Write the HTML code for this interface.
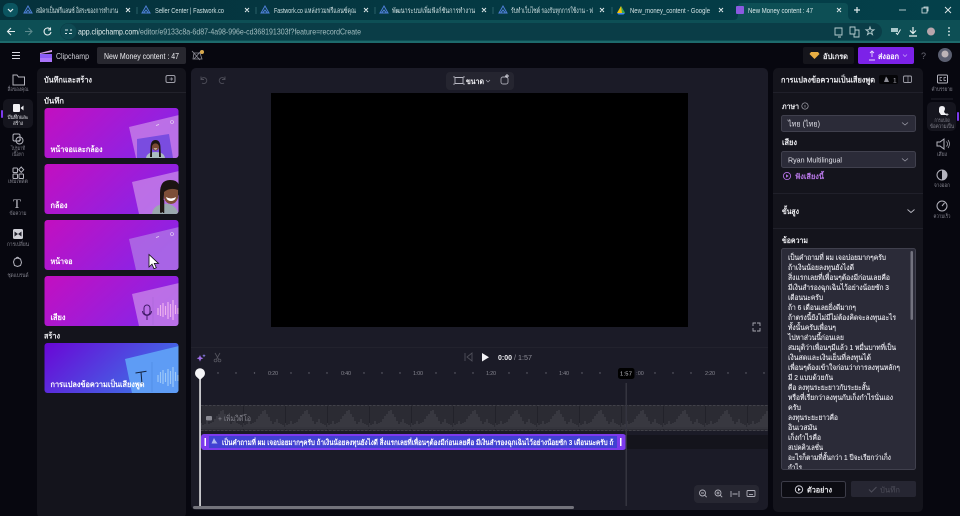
<!DOCTYPE html>
<html><head><meta charset="utf-8"><style>
html,body{margin:0;padding:0;background:#07070f;overflow:hidden}
svg{display:block;font-family:"Liberation Sans","Noto Sans CJK JP",sans-serif;filter:blur(.3px)}
.t{fill:#eeeef2}
.b{font-weight:700}
</style></head><body>
<svg width="960" height="516" viewBox="0 0 960 516" xmlns="http://www.w3.org/2000/svg">
<defs>
<linearGradient id="g1" x1="0" y1="0" x2="1" y2="0.4"><stop offset="0" stop-color="#c30fc0"/><stop offset="1" stop-color="#8a24e6"/></linearGradient>
<linearGradient id="g2" x1="0" y1="0" x2="1" y2="0.4"><stop offset="0" stop-color="#6a06d6"/><stop offset="1" stop-color="#3f6fe6"/></linearGradient>
<linearGradient id="tb" x1="0" y1="0" x2="1" y2="0"><stop offset="0" stop-color="#05323c"/><stop offset="1" stop-color="#04404a"/></linearGradient>
<pattern id="wave" x="201" y="405" width="42" height="26" patternUnits="userSpaceOnUse">
<rect width="42" height="26" fill="#2b2b33"/><rect x="0" width="1" height="26" fill="#22222a"/>
<path d="M0 22V18M2 22V20M4 22V19M6 22V16M8 22V19M10 22V18M12 22V17M14 22V14M16 22V11M18 22V9M20 22V6M22 22V5M24 22V9M26 22V12M28 22V16M30 22V19M32 22V17M34 22V14M36 22V18M38 22V19M40 22V20" stroke="#3f3f47" stroke-width="1.300"/>
<rect y="22" width="42" height="2" fill="#35353d"/>
</pattern>
<clipPath id="ta"><rect x="782" y="249" width="128" height="220"/></clipPath>
<clipPath id="c1"><rect x="44.5" y="108" width="134" height="50" rx="3"/></clipPath>
<clipPath id="c2"><rect x="44.5" y="164" width="134" height="50" rx="3"/></clipPath>
<clipPath id="c3"><rect x="44.5" y="220" width="134" height="50" rx="3"/></clipPath>
<clipPath id="c4"><rect x="44.5" y="276" width="134" height="50" rx="3"/></clipPath>
<clipPath id="c5"><rect x="44.5" y="343" width="134" height="50" rx="3"/></clipPath>
<clipPath id="clipT"><rect x="215" y="435" width="399" height="14"/></clipPath>
</defs>

<rect width="960" height="516" fill="#07070f"/>
<!-- Tab strip -->
<rect width="960" height="20" fill="url(#tb)"/>
<rect x="3" y="3" width="15" height="14" rx="6" fill="#0b5560"/>
<path d="M8 9l2.5 2.5L13 9" fill="none" stroke="#e5eeee" stroke-width="1.2"/>
<g fill="none" stroke="#4d7fd6" stroke-width="1">
<path d="M28 6l4 7h-8zM25.5 13l2.5-3 2.5 3"/>
<path d="M146 6l4 7h-8zM143.500 13l2.500-3 2.500 3"/>
<path d="M265 6l4 7h-8zM262.500 13l2.500-3 2.500 3"/>
<path d="M384 6l4 7h-8zM381.500 13l2.500-3 2.500 3"/>
<path d="M503 6l4 7h-8zM500.500 13l2.500-3 2.500 3"/>
</g>
<g font-size="7.500" fill="#cfe0e2">
<text x="36" y="13" textLength="82" lengthAdjust="spacingAndGlyphs">สมัครเป็นฟรีแลนซ์ อิสระของการทำงาน</text>
<text x="155" y="13" textLength="69" lengthAdjust="spacingAndGlyphs">Seller Center | Fastwork.co</text>
<text x="274" y="13" textLength="82" lengthAdjust="spacingAndGlyphs">Fastwork.co แหล่งรวมฟรีแลนซ์คุณ</text>
<text x="392" y="13" textLength="83" lengthAdjust="spacingAndGlyphs">พัฒนาระบบ/เพิ่มฟังก์ชันการทำงาน</text>
<text x="511" y="13" textLength="82" lengthAdjust="spacingAndGlyphs">รับทำเว็บไซต์ รองรับทุกการใช้งาน - ฟ</text>
<text x="630" y="13" textLength="80" lengthAdjust="spacingAndGlyphs">New_money_content - Google</text>
</g>
<path d="M621 6l-4 7h8z" fill="#f4c20d"/><path d="M621 6l4 7h-3z" fill="#34a853"/><path d="M617 13h8l-1.500 1.500h-5z" fill="#4285f4"/>
<path d="M733 20q5 0 5-5V7q0-4 4-4h102q4 0 4 4v8q0 5 5 5z" fill="#0d4f55"/>
<rect x="736" y="6" width="8" height="8" rx="1" fill="#8a5ae0"/>
<text x="748" y="13" font-size="7.500" fill="#d8e8ea" textLength="65" lengthAdjust="spacingAndGlyphs">New Money content : 47</text>
<g stroke="#dfe9ea" stroke-width="1" fill="none">
<path d="M126 8l4 4m0-4l-4 4M245 8l4 4m0-4l-4 4M364 8l4 4m0-4l-4 4M482 8l4 4m0-4l-4 4M600 8l4 4m0-4l-4 4M719 8l4 4m0-4l-4 4M837 8l4 4m0-4l-4 4"/>
<path d="M857 7v6M854 10h6" stroke-width="1.200"/>
<path d="M899 10h7" stroke-width=".8"/><path d="M922 8h5v5h-5zM924 8V7h4v4h-1" stroke-width=".8"/>
<path d="M945 7l6 6m0-6l-6 6" stroke-width=".9"/>
</g>
<path d="M137 7v7M256 7v7M375 7v7M493 7v7M612 7v7" stroke="#2a6068" stroke-width="1"/>
<!-- Toolbar -->
<rect y="20" width="960" height="21" fill="#0d4f55"/>
<rect y="41" width="960" height="2" fill="#1d6a6c"/>
<rect x="60" y="23" width="822" height="17" rx="8.500" fill="#0a3d47"/>
<circle cx="68.500" cy="31.500" r="8" fill="#0e4a53"/>
<path d="M65 30h3M70 30h2M65 33.500h2M69 33.500h3" stroke="#d7e6e8" stroke-width="1"/>
<g fill="none" stroke="#e3eced" stroke-width="1.100">
<path d="M15 31.500H8M11 28l-3.500 3.500L11 35"/>
<path d="M25 31.500h7M28.500 28l3.500 3.500-3.500 3.500" stroke="#5d8a8e"/>
<path d="M50 29a3.500 3.500 0 1 0 1 3M50.500 27.500v2.500h-2.500"/>
</g>
<text x="78" y="34.500" font-size="8.200" fill="#e6f0f0" textLength="60" lengthAdjust="spacingAndGlyphs">app.clipchamp.com</text>
<text x="138" y="34.500" font-size="8.200" fill="#a3bdc0" textLength="223" lengthAdjust="spacingAndGlyphs">/editor/e9133c8a-6d87-4a98-996e-cd368191303f?feature=recordCreate</text>
<g fill="none" stroke="#b9cfd1" stroke-width=".9">
<path d="M835 28h7v7h-7zM838 37h3"/>
<path d="M850 27h5v7h-5zM855 30h4v7h-5v-3"/>
<path d="M870 27l1 2.800h3l-2.400 1.800.9 3-2.500-1.800-2.500 1.800.9-3-2.400-1.800h3z"/>
</g>
<path d="M891 28h7v4h-7z" fill="#a8c8ca"/><path d="M896 33l1.500 1.500 3-5" fill="none" stroke="#e5f0f0"/>
<path d="M913 27v6M910 30.500l3 3 3-3M909 36h8" fill="none" stroke="#e8f1f1" stroke-width="1.200"/>
<circle cx="931" cy="31.500" r="4" fill="#b8a6ac"/>
<circle cx="949" cy="28" r=".9" fill="#e8f1f1"/><circle cx="949" cy="31.500" r=".9" fill="#e8f1f1"/><circle cx="949" cy="35" r=".9" fill="#e8f1f1"/>

<!-- App header -->
<path d="M12 52.500h8M12 55.500h8M12 58.500h8" stroke="#d8d8e0" stroke-width="1.100"/>
<path d="M40 53l12-3v2l-12 2z" fill="#d4a0e8"/>
<rect x="40" y="54" width="12" height="8" fill="#8b5cf6"/><rect x="40" y="58" width="12" height="4" fill="#c084fc" opacity=".6"/>
<text x="56" y="59" font-size="8" fill="#d0d0d8" textLength="33" lengthAdjust="spacingAndGlyphs">Clipchamp</text>
<rect x="97" y="47" width="89" height="17" rx="2" fill="#27272f"/>
<text x="104" y="59" font-size="7.800" fill="#eeeef2" textLength="75" lengthAdjust="spacingAndGlyphs">New Money content : 47</text>
<path d="M194 53h6l2 6h-9zM194 59l7-8M192 51l8 9" fill="none" stroke="#8e8e98" stroke-width=".8"/>
<circle cx="202" cy="52" r="2" fill="#d9a94e"/>
<rect x="803" y="47" width="51" height="17" rx="2" fill="#15151c"/>
<path d="M811 52h7l1.500 2-5 5-5-5z" fill="#e7ad43"/>
<text x="823" y="59" font-size="7.500" class="t b" textLength="25" lengthAdjust="spacingAndGlyphs">อัปเกรด</text>
<rect x="858" y="47" width="56" height="17" rx="2" fill="#7c22e8"/>
<path d="M869 60h6M872 51v6M870 53l2-2 2 2" fill="none" stroke="#e8d8ff" stroke-width=".9"/>
<text x="878" y="59" font-size="7.500" fill="#fff" class="b" textLength="21" lengthAdjust="spacingAndGlyphs">ส่งออก</text>
<path d="M903 54.500l2 2 2-2" fill="none" stroke="#c8a8f8" stroke-width=".7"/>
<text x="921" y="59" font-size="9" fill="#6a6a76">?</text>
<circle cx="945" cy="55" r="7" fill="#5a5e70"/><circle cx="945" cy="54" r="3.500" fill="#bdb4b8"/>

<!-- Left rail -->
<rect x="3" y="99" width="30" height="29" rx="5" fill="#15151e"/>
<rect x="1" y="110" width="2" height="8" rx="1" fill="#7c3aed"/>
<g fill="none" stroke="#b4b4be" stroke-width="1">
<path d="M13 75h4l1.500 2h6v8h-11.500z"/>
<rect x="13" y="134" width="7" height="7" rx="1.500"/>
<rect x="16" y="137" width="7" height="7" rx="3.500"/>
<path d="M18 140.500l1 1 2-2" stroke-width=".8"/>
<rect x="13" y="168" width="4.500" height="4.500" rx=".8"/>
<rect x="13" y="174" width="4.500" height="4.500" rx=".8"/>
<rect x="19" y="174" width="4.500" height="4.500" rx=".8"/>
<path d="M21.200 167l2.500 2.700-2.500 2.700-2.500-2.700z"/>
<path d="M17.500 258l3 1 1 3.500-1 3-3 1-3-1-1-3.500 1-3z M15.500 259q2-3.500 4 0"/>
</g>
<rect x="13" y="104" width="7" height="8" rx="1" fill="#f1f1f5"/><path d="M20.500 108l3-2.500v5z" fill="#f1f1f5"/>
<text x="13" y="208" font-size="13" font-family="Liberation Serif" fill="#c4c4cc">T</text>
<rect x="13" y="229" width="10" height="10" rx="1.500" fill="#cfcfd6"/>
<path d="M14.500 231.500l3.500 2.500-3.500 2.500zM21.500 231.500l-3.500 2.500 3.500 2.500z" fill="#22222c"/>
<g font-size="5.500" fill="#83838e" text-anchor="middle">
<text x="18" y="91" textLength="21" lengthAdjust="spacingAndGlyphs">สื่อของคุณ</text>
<text x="18" y="119" fill="#e6e6ec" textLength="21" lengthAdjust="spacingAndGlyphs">บันทึกและ</text>
<text x="18" y="125" fill="#e6e6ec" textLength="10" lengthAdjust="spacingAndGlyphs">สร้าง</text>
<text x="18" y="150" textLength="14" lengthAdjust="spacingAndGlyphs">ไปรูมาที</text>
<text x="18" y="156" textLength="12" lengthAdjust="spacingAndGlyphs">เนื้อหา</text>
<text x="18" y="183" textLength="20" lengthAdjust="spacingAndGlyphs">เทมเพลต</text>
<text x="18" y="215" textLength="17" lengthAdjust="spacingAndGlyphs">ข้อความ</text>
<text x="18" y="246" textLength="22" lengthAdjust="spacingAndGlyphs">การเปลี่ยน</text>
<text x="18" y="277" textLength="21" lengthAdjust="spacingAndGlyphs">ชุดแบรนด์</text>
</g>

<!-- Left panel -->
<rect x="37" y="68" width="149" height="450" rx="5" fill="#14141c"/>
<path d="M37 92.500h149" stroke="#22222b"/>
<text x="44" y="82.500" font-size="8" class="t b" textLength="48" lengthAdjust="spacingAndGlyphs">บันทึกและสร้าง</text>
<rect x="166" y="75.500" width="9" height="7" rx="1.500" fill="none" stroke="#a0a0aa"/><path d="M169.500 79h3M171 77.500l1.500 1.500-1.500 1.500" fill="none" stroke="#a0a0aa" stroke-width=".7"/>
<text x="44" y="103.500" font-size="8" class="t b" textLength="20" lengthAdjust="spacingAndGlyphs">บันทึก</text>

<g clip-path="url(#c1)">
<rect x="44.500" y="108" width="134" height="50" fill="url(#g1)"/>
<path d="M129 127l50-12v43h-43z" fill="#c98ae8" opacity=".75"/>
<path d="M137 139l32-5 4 24h-36z" fill="#7a4ce0"/>
<path d="M146 158q1-6 9.500-6t9.500 6z" fill="#a8bcc0"/>
<path d="M150.500 148q0-8 5-8t5 8l.5 9h-2v-9h-7v9h-2z" fill="#1c1412"/>
<circle cx="155.500" cy="147" r="3.600" fill="#7a4a34"/>
<path d="M153.500 148.500q2 2 4 0z" fill="#fff"/>
<circle cx="172" cy="122" r="1.500" fill="none" stroke="#eadcf4" stroke-width=".6"/><path d="M156 125.500l3-1" stroke="#eadcf4" stroke-width=".7"/>
</g>
<text x="50.500" y="152" font-size="8" fill="#fff" class="b" textLength="52" lengthAdjust="spacingAndGlyphs">หน้าจอและกล้อง</text>

<g clip-path="url(#c2)">
<rect x="44.500" y="164" width="134" height="50" fill="url(#g1)"/>
<path d="M132 182l47-11v43h-40z" fill="#c98ae8" opacity=".75"/>
<path d="M152 214q1-9 12-10t15 10z" fill="#9aa8ae"/>
<path d="M160 193q0-13 10-13t9 9v4l-1 3v-2q-8 0-14 0l-1 18h-3z" fill="#1c1412"/>
<path d="M164 192q6-5 14-2v8q-2 6-7 6t-7-6z" fill="#7d4e38"/>
<path d="M166 197q5 3 10 0q-1 4-5 4t-5-4z" fill="#fff"/>
<path d="M161 195v18M163.500 200v13" stroke="#1c1412" stroke-width="1.500"/>
</g>
<text x="50.500" y="208" font-size="8" fill="#fff" class="b" textLength="17" lengthAdjust="spacingAndGlyphs">กล้อง</text>

<g clip-path="url(#c3)">
<rect x="44.500" y="220" width="134" height="50" fill="url(#g1)"/>
<path d="M129 239l50-12v43h-43z" fill="#b27ae6" opacity=".75"/>
<circle cx="172" cy="234" r="1.500" fill="none" stroke="#eadcf4" stroke-width=".6"/><path d="M156 237.500l3-1" stroke="#eadcf4" stroke-width=".7"/>
</g>
<text x="50.500" y="264" font-size="8" fill="#fff" class="b" textLength="22" lengthAdjust="spacingAndGlyphs">หน้าจอ</text>
<path d="M149 254.500v12.500l3-2.800 2 4.500 2.300-1-2-4.300h4.200z" fill="#fff" stroke="#111" stroke-width=".8"/>

<g clip-path="url(#c4)">
<rect x="44.500" y="276" width="134" height="50" fill="url(#g1)"/>
<path d="M132 294l47-11v43h-40z" fill="#c98ae8" opacity=".75"/>
<path d="M153 297v28" stroke="#a868d8" stroke-width=".6"/>
<rect x="144" y="305" width="6" height="10" rx="3" fill="none" stroke="#401a68" stroke-width="1"/>
<path d="M142.500 311a4.500 4.500 0 0 0 9 0M147 316v4" fill="none" stroke="#401a68" stroke-width="1"/>
<path d="M158 308v7M160.500 305v11M163 303v14M165.500 306v9M168 302v17M170.500 304v13M173 300v20M175.500 305v9M178 308v6" stroke="#eeb0ee" stroke-width="1.200"/>
</g>
<text x="50.500" y="320" font-size="8" fill="#fff" class="b" textLength="15" lengthAdjust="spacingAndGlyphs">เสียง</text>
<text x="44" y="338.500" font-size="8" class="t b" textLength="16" lengthAdjust="spacingAndGlyphs">สร้าง</text>

<g clip-path="url(#c5)">
<rect x="44.500" y="343" width="134" height="50" fill="url(#g2)"/>
<path d="M125 359l54-13v47h-47z" fill="#5e9cf5"/>
<path d="M152 362v30" stroke="#4a86e0" stroke-width=".6"/>
<path d="M158 375v7M160.500 372v11M163 370v14M165.500 373v9M168 369v17M170.500 371v13M173 367v20M175.500 372v9M178 375v6" stroke="#9cc8f8" stroke-width="1.200"/>
<path d="M135.500 373l11-1.800M141 372l1 12" fill="none" stroke="#13233f" stroke-width="1"/>
</g>
<text x="50.500" y="387" font-size="8" fill="#fff" class="b" textLength="94" lengthAdjust="spacingAndGlyphs">การแปลงข้อความเป็นเสียงพูด</text>

<!-- Canvas panel -->
<rect x="191" y="68" width="577" height="442" rx="5" fill="#1b1b27"/>
<rect x="271" y="93" width="417" height="234" fill="#000"/>
<path d="M201 79.500a3 3 0 1 1 1 3.500M201 76.500v3h3M225 79.500a3 3 0 1 0-1 3.500M225 76.500v3h-3" fill="none" stroke="#4d4d58" stroke-width=".9"/>
<rect x="446" y="72" width="68" height="18" rx="4" fill="#252530"/>
<path d="M455 78h8v6h-8zM454 76.500v1.500M464 76.500v1.500M454 84v1.500M464 84v1.500" fill="none" stroke="#b8b8c2" stroke-width=".9" transform="translate(0,-.5)"/>
<text x="466" y="84" font-size="7.500" class="t b" textLength="18" lengthAdjust="spacingAndGlyphs">ขนาด</text>
<path d="M486 80l2 2 2-2" fill="none" stroke="#a8a8b2" stroke-width=".7"/>
<rect x="501" y="77" width="7" height="7" rx="2" fill="none" stroke="#a8a8b2" stroke-width=".9"/><path d="M505 76h4M507 74v4" stroke="#d8d8e0" stroke-width=".9"/>
<path d="M753 326v-3h3M760 326v-3h-3M753 328v3h3M760 328v3h-3" fill="none" stroke="#a8a8b2" stroke-width=".9"/>
<path d="M191 347.500h577" stroke="#22222d"/>

<!-- Timeline controls -->
<path d="M200 355l1 2.300 2.300 1-2.300 1-1 2.300-1-2.300-2.300-1 2.300-1z" fill="#a070e8"/><path d="M204 354l.5 1.200 1.200.5-1.200.5-.5 1.200-.5-1.200-1.200-.5 1.200-.5z" fill="#8a80e8"/>
<path d="M215 353l3.500 6M220 353l-3.500 6" fill="none" stroke="#55555f" stroke-width=".8"/><circle cx="215.500" cy="360.500" r="1.400" fill="none" stroke="#55555f" stroke-width=".8"/><circle cx="219.500" cy="360.500" r="1.400" fill="none" stroke="#55555f" stroke-width=".8"/>
<path d="M465 353v8M472 353v8l-5-4z" fill="none" stroke="#50505a" stroke-width=".9"/>
<path d="M482 353v8.500l7-4.200z" fill="#f2f2f6"/>
<text x="498" y="360" font-size="7.500" class="t b" textLength="14" lengthAdjust="spacingAndGlyphs">0:00</text>
<text x="514" y="360" font-size="7" fill="#8c8c96" textLength="18" lengthAdjust="spacingAndGlyphs">/ 1:57</text>

<!-- Ruler -->
<g font-size="5.500" fill="#85858f" text-anchor="middle">
<text x="273" y="375" textLength="10">0:20</text><text x="346" y="375" textLength="10">0:40</text><text x="418" y="375" textLength="10">1:00</text><text x="491" y="375" textLength="10">1:20</text><text x="564" y="375" textLength="10">1:40</text><text x="710" y="375" textLength="10">2:20</text><text x="640" y="375">:00</text>
</g>
<g fill="#6a6a74">
<circle cx="218" cy="373" r=".7"/><circle cx="236" cy="373" r=".7"/><circle cx="254.500" cy="373" r=".7"/><circle cx="291" cy="373" r=".7"/><circle cx="309" cy="373" r=".7"/><circle cx="327" cy="373" r=".7"/><circle cx="364" cy="373" r=".7"/><circle cx="382" cy="373" r=".7"/><circle cx="400" cy="373" r=".7"/><circle cx="436" cy="373" r=".7"/><circle cx="455" cy="373" r=".7"/><circle cx="473" cy="373" r=".7"/><circle cx="509" cy="373" r=".7"/><circle cx="527" cy="373" r=".7"/><circle cx="546" cy="373" r=".7"/><circle cx="582" cy="373" r=".7"/><circle cx="600" cy="373" r=".7"/><circle cx="655" cy="373" r=".7"/><circle cx="673" cy="373" r=".7"/><circle cx="691" cy="373" r=".7"/><circle cx="728" cy="373" r=".7"/><circle cx="746" cy="373" r=".7"/><circle cx="764" cy="373" r=".7"/>
</g>
<!-- Tracks -->
<rect x="201" y="405" width="567" height="26" fill="url(#wave)"/>
<path d="M201 405.500h567M201 430.500h567" stroke="#4a4a52" stroke-dasharray="2.500 1.500" stroke-width=".8"/>
<rect x="206" y="416" width="6" height="4.500" rx="1" fill="#8a8a92"/>
<text x="218" y="421" font-size="7.500" fill="#85858e" textLength="33" lengthAdjust="spacingAndGlyphs">+ เพิ่มวิดีโอ</text>
<rect x="626" y="435" width="142" height="14" fill="#14141c"/>
<rect x="201" y="434" width="425" height="16" rx="3" fill="#7c3aed"/>
<rect x="209" y="436" width="408" height="12" fill="#4141d2"/>
<rect x="204.500" y="438" width="1.500" height="8" fill="#fff"/><rect x="620" y="438" width="1.500" height="8" fill="#fff"/>
<path d="M214 438l1 2 2.500 3.500h-6z" fill="#b0b8f0"/>
<g clip-path="url(#clipT)">
<text x="222" y="445" font-size="7.500" fill="#fff" class="b" textLength="400" lengthAdjust="spacingAndGlyphs">เป็นคำถามที่ ผม เจอบ่อยมากๆครับ ถ้าเงินน้อยลงทุนยังไงดี สิ่งแรกเลยที่เพื่อนๆต้องมีก่อนเลยคือ มีเงินสำรองฉุกเฉินไว้อย่างน้อยซัก 3 เดือนนะครับ ถ้า 6</text>
</g>
<!-- Playhead / end -->
<rect x="625.500" y="383" width="1.500" height="123" fill="#34343f"/>
<rect x="618" y="368" width="16.500" height="11" rx="2.500" fill="#000"/>
<text x="626" y="375.500" font-size="5.800" fill="#c8c8d0" text-anchor="middle" textLength="12">1:57</text>
<rect x="199.300" y="373" width="1.500" height="133" fill="#f2f2f4"/>
<path d="M200 380l-3.800-3.500a5 5 0 1 1 7.600 0z" fill="#f5f5f7"/>
<!-- Scrollbar -->
<rect x="193" y="506" width="381" height="3" rx="1.500" fill="#73737b"/>
<!-- Zoom controls -->
<rect x="694" y="485" width="65" height="18" rx="4" fill="#272732"/>
<g fill="none" stroke="#b0b0ba" stroke-width=".9">
<circle cx="702.500" cy="493" r="3"/><path d="M704.700 495.200l2 2M701 493h3"/>
<circle cx="718" cy="493" r="3"/><path d="M720.200 495.200l2 2M716.500 493h3M718 491.500v3"/>
<path d="M731 491v6M739 491v6M732.500 494h5"/>
<rect x="747" y="490.500" width="8" height="6" rx="1"/><path d="M749 494.500h4"/>
</g>

<!-- Right panel -->
<rect x="773" y="68" width="150" height="444" rx="5" fill="#14141c"/>
<path d="M773 92.500h150M773 193.500h150M773 228.500h150" stroke="#20202a"/>
<text x="781" y="82.500" font-size="8" class="t b" textLength="94" lengthAdjust="spacingAndGlyphs">การแปลงข้อความเป็นเสียงพูด</text>
<rect x="879" y="75" width="19" height="9" rx="2" fill="#050508"/>
<path d="M886 76.500l1.500 2 1.500 3.500h-5z" fill="#8c8c96"/><text x="893" y="82.500" font-size="6.500" fill="#b0b0ba">1</text>
<rect x="903.500" y="76" width="8" height="6.500" rx="1.200" fill="none" stroke="#a0a0aa" stroke-width=".9"/><path d="M908 76v6.500" stroke="#a0a0aa" stroke-width=".7"/>
<text x="782" y="109" font-size="8" class="t b" textLength="17" lengthAdjust="spacingAndGlyphs">ภาษา</text>
<circle cx="805" cy="106" r="3.200" fill="none" stroke="#a8a8b2" stroke-width=".7"/><path d="M805 105v2.500" stroke="#a8a8b2" stroke-width=".7"/>
<rect x="781.500" y="115.500" width="134" height="16" rx="2" fill="#2b2b38" stroke="#40404d"/>
<text x="788" y="126.500" font-size="7.800" fill="#e2e2ea" textLength="32" lengthAdjust="spacingAndGlyphs">ไทย (ไทย)</text>
<path d="M902 122.500l3 2.500 3-2.500" fill="none" stroke="#9c9ca8" stroke-width=".8"/>
<text x="782" y="145" font-size="8" class="t b" textLength="15" lengthAdjust="spacingAndGlyphs">เสียง</text>
<rect x="781.500" y="151.500" width="134" height="16" rx="2" fill="#2b2b38" stroke="#40404d"/>
<text x="788" y="162.500" font-size="7.500" fill="#e2e2ea" textLength="54" lengthAdjust="spacingAndGlyphs">Ryan Multilingual</text>
<path d="M902 158.500l3 2.500 3-2.500" fill="none" stroke="#9c9ca8" stroke-width=".8"/>
<circle cx="787" cy="176" r="3.600" fill="none" stroke="#b06fe0" stroke-width=".9"/><path d="M786 174.300v3.400l2.700-1.700z" fill="#b06fe0"/>
<text x="795" y="179" font-size="7.500" fill="#b878e8" class="b" textLength="29" lengthAdjust="spacingAndGlyphs">ฟังเสียงนี้</text>
<text x="782" y="214" font-size="8" class="t b" textLength="17" lengthAdjust="spacingAndGlyphs">ขั้นสูง</text>
<path d="M907.500 209.500l3.500 3 3.500-3" fill="none" stroke="#b8b8c2" stroke-width=".9"/>
<text x="782" y="243" font-size="8" class="t b" textLength="26" lengthAdjust="spacingAndGlyphs">ข้อความ</text>
<rect x="781.500" y="248.500" width="134" height="221" rx="2" fill="#2b2b38" stroke="#40404d"/>
<rect x="910.500" y="251" width="2.500" height="69" rx="1.200" fill="#73737f"/>
<g clip-path="url(#ta)" font-size="7.500" fill="#eaeaf0" stroke="#eaeaf0" stroke-width=".12">
<text x="788" y="260" textLength="98" lengthAdjust="spacingAndGlyphs">เป็นคำถามที่ ผม เจอบ่อยมากๆครับ</text>
<text x="788" y="270" textLength="66" lengthAdjust="spacingAndGlyphs">ถ้าเงินน้อยลงทุนยังไงดี</text>
<text x="788" y="280" textLength="102" lengthAdjust="spacingAndGlyphs">สิ่งแรกเลยที่เพื่อนๆต้องมีก่อนเลยคือ</text>
<text x="788" y="290" textLength="101" lengthAdjust="spacingAndGlyphs">มีเงินสำรองฉุกเฉินไว้อย่างน้อยซัก 3</text>
<text x="788" y="300" textLength="35" lengthAdjust="spacingAndGlyphs">เดือนนะครับ</text>
<text x="788" y="310" textLength="68" lengthAdjust="spacingAndGlyphs">ถ้า 6 เดือนเลยยิ่งดีมากๆ</text>
<text x="788" y="320" textLength="108" lengthAdjust="spacingAndGlyphs">ถ้าตรงนี้ยังไม่มีไม่ต้องคิดจะลงทุนอะไร</text>
<text x="788" y="330" textLength="48" lengthAdjust="spacingAndGlyphs">ทั้งนั้นครับเพื่อนๆ</text>
<text x="788" y="340" textLength="56" lengthAdjust="spacingAndGlyphs">ไปหาส่วนนี้ก่อนเลย</text>
<text x="788" y="350" textLength="108" lengthAdjust="spacingAndGlyphs">สมมุติว่าเพื่อนๆมีแล้ว 1 หมื่นบาทที่เป็น</text>
<text x="788" y="360" textLength="83" lengthAdjust="spacingAndGlyphs">เงินสดและเงินเย็นที่ลงทุนได้</text>
<text x="788" y="370" textLength="112" lengthAdjust="spacingAndGlyphs">เพื่อนๆต้องเข้าใจก่อนว่าการลงทุนหลักๆ</text>
<text x="788" y="380" textLength="45" lengthAdjust="spacingAndGlyphs">มี 2 แบบด้วยกัน</text>
<text x="788" y="390" textLength="82" lengthAdjust="spacingAndGlyphs">คือ ลงทุนระยะยาวกับระยะสั้น</text>
<text x="788" y="400" textLength="105" lengthAdjust="spacingAndGlyphs">หรือที่เรียกว่าลงทุนกับเก็งกำไรนั่นเอง</text>
<text x="788" y="410" textLength="13" lengthAdjust="spacingAndGlyphs">ครับ</text>
<text x="788" y="420" textLength="50" lengthAdjust="spacingAndGlyphs">ลงทุนระยะยาวคือ</text>
<text x="788" y="430" textLength="29" lengthAdjust="spacingAndGlyphs">อินเวสมัน</text>
<text x="788" y="440" textLength="33" lengthAdjust="spacingAndGlyphs">เก็งกำไรคือ</text>
<text x="788" y="450" textLength="35" lengthAdjust="spacingAndGlyphs">สเปคคิวเลชั่น</text>
<text x="788" y="460" textLength="103" lengthAdjust="spacingAndGlyphs">อะไรก็ตามที่สั้นกว่า 1 ปีจะเรียกว่าเก็ง</text>
<text x="788" y="470" textLength="14" lengthAdjust="spacingAndGlyphs">กำไร</text>
</g>
<rect x="781.500" y="481.500" width="64" height="16" rx="2" fill="#0c0c12" stroke="#3c3c48"/>
<circle cx="799" cy="489.500" r="3.700" fill="none" stroke="#dcdce4" stroke-width=".9"/><path d="M798 487.700v3.600l2.800-1.800z" fill="#dcdce4"/>
<text x="807" y="492.500" font-size="7.500" class="t b" textLength="25" lengthAdjust="spacingAndGlyphs">ตัวอย่าง</text>
<rect x="851" y="481" width="65" height="16" rx="2" fill="#262632"/>
<path d="M869 489.500l2.500 2.500 5-5" fill="none" stroke="#4e4e5a"/>
<text x="880" y="492.500" font-size="7.500" fill="#4e4e5a" textLength="20" lengthAdjust="spacingAndGlyphs">บันทึก</text>

<!-- Right rail -->
<rect x="927" y="102" width="29" height="29" rx="5" fill="#15151e"/>
<rect x="957" y="112" width="2" height="9" rx="1" fill="#7c3aed"/>
<path d="M931 99h22" stroke="#22222b"/>
<g fill="none" stroke="#b4b4be" stroke-width="1">
<rect x="937.500" y="75" width="10" height="8" rx="1"/>
<path d="M942 77.500h-2v3h2M946 77.500h-2v3h2" stroke-width=".7"/>
<path d="M937 142h3l4-3v10l-4-3h-3z"/><path d="M946.500 141.500q2 2.500 0 5M948 140q3 4 0 8" stroke-width=".7"/>
<circle cx="942" cy="175" r="5"/>
<circle cx="942" cy="206" r="5"/><path d="M942 206l2.500-3"/>
</g>
<path d="M942 170a5 5 0 0 1 0 10z" fill="#b4b4be"/>
<path d="M939 109q0-3 3-3t3 3l-1 3 3 3h-6l-2-3z" fill="#f0f0f4"/><path d="M947 113v3M945.500 114.500h3" stroke="#e8e8ee" stroke-width=".7"/>
<g font-size="5.500" fill="#83838e" text-anchor="middle">
<text x="942" y="91" textLength="21" lengthAdjust="spacingAndGlyphs">คำบรรยาย</text>
<text x="942" y="122" textLength="15" lengthAdjust="spacingAndGlyphs">การแปลง</text>
<text x="942" y="128" textLength="24" lengthAdjust="spacingAndGlyphs">ข้อความเป็น</text>
<text x="942" y="156" textLength="10" lengthAdjust="spacingAndGlyphs">เสียง</text>
<text x="942" y="187" textLength="16" lengthAdjust="spacingAndGlyphs">จางออก</text>
<text x="942" y="218" textLength="17" lengthAdjust="spacingAndGlyphs">ความเร็ว</text>
</g>
</svg>
</body></html>
